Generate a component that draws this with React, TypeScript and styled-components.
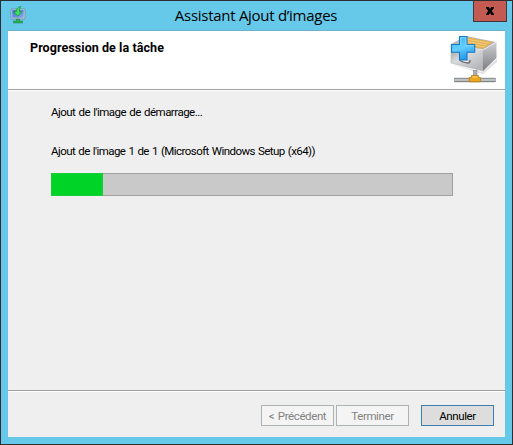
import React from "react";
import styled, { createGlobalStyle } from "styled-components";

const GlobalStyle = createGlobalStyle`
  * { box-sizing: border-box; }
  body { margin: 0; overflow: hidden; }
`;

const Window = styled.div`
  width: 513px;
  height: 445px;
  display: flex;
  flex-direction: column;
  padding: 0 7px 7px;
  border: 1px solid #2d2d33;
  background: #66c9ea;
  font-family: Roboto, sans-serif;
  color: #000;
`;

const TitleBar = styled.div`
  height: 29px;
  flex: none;
  display: grid;
  grid-template-columns: 31px 1fr 34px;
  margin-right: -2px;
`;

const TitleIcon = styled.svg`
  margin: 5px 0 0 2px;
`;

const Title = styled.div`
  font: 15px/29px "Open Sans", sans-serif;
  letter-spacing: -0.28px;
  text-align: center;
  white-space: nowrap;
`;

const CloseButton = styled.button`
  height: 21px;
  padding: 0;
  display: grid;
  place-items: center;
  border: 1px solid #41383f;
  border-top: 0;
  background: #c35b53;
`;

const Client = styled.main`
  flex: 1;
  display: flex;
  flex-direction: column;
  border-top: 1px solid #6db0cb;
  background: #efefef;
`;

const Header = styled.header`
  height: 60px;
  flex: none;
  display: flex;
  justify-content: space-between;
  padding: 0 7px 0 22px;
  border-bottom: 1px solid #fff;
  box-shadow: inset 0 -1px #a0a0a0;
  background: #fff;
`;

const Heading = styled.h1`
  margin: 9px 0 0;
  font: bold 12.5px/16px Roboto, sans-serif;
  letter-spacing: 0.07px;
  white-space: nowrap;
`;

const HeaderArt = styled.svg`
  margin-top: 3px;
`;

const Body = styled.section`
  flex: 1;
  padding: 13px 52px 0 43px;
`;

const Message = styled.p<{ $gap: number; $spacing: number }>`
  margin: 0 0 ${(p) => p.$gap}px;
  font-size: 11.5px;
  line-height: 16px;
  letter-spacing: ${(p) => p.$spacing}px;
  word-spacing: 0.8px;
  white-space: nowrap;
`;

const Track = styled.div`
  height: 23px;
  border: 1px solid #a0a0a0;
  background: #c9c9c9;
`;

const Fill = styled.div`
  width: 52px;
  height: 23px;
  margin: -1px;
  border: 1px solid #18cd38;
  background: #00d328;
`;

const Footer = styled.footer`
  height: 47px;
  flex: none;
  display: flex;
  padding: 14px 11px 0;
  justify-content: flex-end;
  border-top: 1px solid #a0a0a0;
  box-shadow: inset 0 1px #fff;
`;

const Button = styled.button`
  width: 73px;
  height: 21px;
  padding: 0;
  margin-left: 2px;
  border: 1px solid #3c7fb1;
  background: #dddddd;
  color: #000;
  font: 11.5px/18px Roboto, sans-serif;
  letter-spacing: -0.4px;
  word-spacing: 1.2px;
  white-space: nowrap;
  &:disabled {
    border-color: #adb2b5;
    background: #f4f4f4;
    color: #838383;
  }
  &:last-child { margin-left: 12px; }
`;

function MonitorIcon() {
  return (
    <TitleIcon width="16" height="19" viewBox="10 6 16 19">
      <defs>
        <linearGradient id="screen" x2="1" y2="1">
          <stop offset="0" stopColor="#3970cf" />
          <stop offset="1" stopColor="#89aced" />
        </linearGradient>
      </defs>
      <rect x="11" y="9" width="14" height="10" rx="1" fill="#c3d0d8" stroke="#62788a" strokeWidth=".6" />
      <rect x="12.300" y="10" width="11.400" height="7.800" fill="url(#screen)" />
      <path d="M16.500 19h3v2h3v2h-9v-2h3z" fill="#22b653" stroke="#35785b" strokeWidth=".6" />
      <path d="M20.800 6.500c-3 .5-4.600 2.500-4.600 5.200H13.700l4.200 4.500 3.900-4.500h-2.400c0-2 .3-3.600 1.400-5.200z" fill="#3fe35c" stroke="#118c35" strokeWidth=".7" />
    </TitleIcon>
  );
}

function DrawerArt() {
  return (
    <HeaderArt width="48" height="52" viewBox="450 34 48 52">
      <defs>
        <linearGradient id="front" x2=".7" y2="1">
          <stop offset="0" stopColor="#8f9195" />
          <stop offset=".5" stopColor="#d9dadc" />
          <stop offset="1" stopColor="#b4b5b9" />
        </linearGradient>
        <linearGradient id="side" x2="0" y2="1">
          <stop offset="0" stopColor="#cfd0d3" />
          <stop offset="1" stopColor="#7b7c81" />
        </linearGradient>
        <linearGradient id="plus" x2=".3" y2="1">
          <stop offset="0" stopColor="#38b6f6" />
          <stop offset=".55" stopColor="#62ceff" />
          <stop offset="1" stopColor="#299ceb" />
        </linearGradient>
        <linearGradient id="cable" x2="0" y2="1">
          <stop offset="0" stopColor="#7c8285" />
          <stop offset=".5" stopColor="#d6d9da" />
          <stop offset="1" stopColor="#666b6e" />
        </linearGradient>
      </defs>
      <path d="M451 64l31 8 15-13v3L483 74z" fill="#c9c9cb" opacity=".6" />
      <path d="M451 44l15-8 30 6-13 9z" fill="#b7b8bb" />
      <path d="M461 42l6-5 26 5-10 7-18-4z" fill="#e3b254" />
      <path d="M466 39l23 4M464 41l23 4M463 43l22 4" stroke="#f7d78e" strokeWidth=".7" />
      <path d="M451 44l32 6v21l-32-8z" fill="url(#front)" stroke="#a8a9ad" strokeWidth=".5" />
      <path d="M483 50l13.500-8v16L483 71z" fill="url(#side)" />
      <path d="M451 44l32 6 13.500-8" fill="none" stroke="#f4f4f5" strokeWidth=".8" />
      <path d="M460 60q1 2 8 3 2 0 2-3" fill="none" stroke="#6d6f74" strokeWidth="1.500" />
      <path d="M461 59.200q2 2 7 2.500" fill="none" stroke="#fff" strokeWidth=".9" />
      <rect x="454.300" y="78" width="41.400" height="4" fill="url(#cable)" stroke="#85898b" strokeWidth=".4" />
      <rect x="473.500" y="70.500" width="3.500" height="6" fill="#aeb2b5" stroke="#73787b" strokeWidth=".5" />
      <path d="M471.500 75.500h7v2h2v4.300h-11.300v-4.300h2.300z" fill="#eda71c" stroke="#b47610" strokeWidth=".7" />
      <path d="M472.500 77h5" stroke="#ffdc77" />
      <path d="M459.500 36.500h7.500v8h7.700v7.700H467V60h-7.500v-7.800h-8v-7.700h8z" fill="url(#plus)" stroke="#1878c4" strokeWidth="1.100" strokeLinejoin="round" />
      <path d="M460.600 45.500v-7.900h5.300v8h7.700" fill="none" stroke="#8edcff" strokeWidth=".7" />
    </HeaderArt>
  );
}

export default function App() {
  return (
    <>
      <GlobalStyle />
      <Window>
        <TitleBar>
          <MonitorIcon />
          <Title>Assistant Ajout d’images</Title>
          <CloseButton aria-label="Fermer">
            <svg width="8" height="8" viewBox="0 0 9 8" preserveAspectRatio="none"><path d="M0 0h3l1.500 2L6 0h3v1L6.500 4 9 7v1H6L4.500 6 3 8H0V7l2.500-3L0 1z" /></svg>
          </CloseButton>
        </TitleBar>
        <Client>
          <Header>
            <Heading>Progression de la tâche</Heading>
            <DrawerArt />
          </Header>
          <Body>
            <Message $gap={23} $spacing={-0.51}>Ajout de l'image de démarrage...</Message>
            <Message $gap={14} $spacing={-0.56}>Ajout de l'image 1 de 1 (Microsoft Windows Setup (x64))</Message>
            <Track><Fill /></Track>
          </Body>
          <Footer>
            <Button disabled>&lt; Précédent</Button>
            <Button disabled>Terminer</Button>
            <Button>Annuler</Button>
          </Footer>
        </Client>
      </Window>
    </>
  );
}
